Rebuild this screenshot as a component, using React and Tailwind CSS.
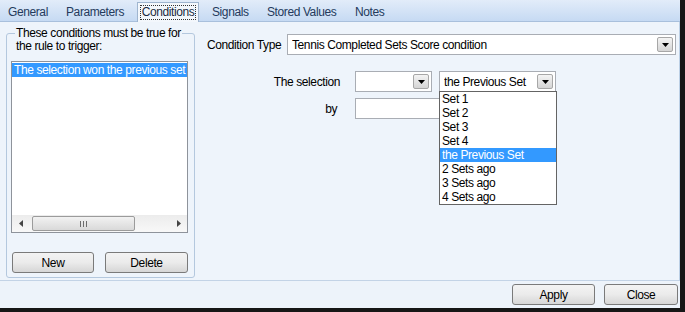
import React from "react";

const tabs = [
    { label: "General", cls: "w-[58px] pl-[8px]" },
    { label: "Parameters", cls: "w-[79px] pl-[8px]" },
    { label: "Conditions", selected: true },
    { label: "Signals", cls: "w-[68px] pl-[13px]" },
    { label: "Stored Values", cls: "w-[88px] pl-[0px]" },
    { label: "Notes", cls: "w-[60px] pl-[0px]" },
];

const setOptions = [
    "Set 1",
    "Set 2",
    "Set 3",
    "Set 4",
    "the Previous Set",
    "2 Sets ago",
    "3 Sets ago",
    "4 Sets ago",
];

const DownArrow = () => (
    <svg width="7" height="4" viewBox="0 0 7 4">
        <path d="M0 0h7L3.5 4z" fill="#000" />
    </svg>
);

const DropButton = () => (
    <div className="shrink-0 flex items-center justify-center w-[16px] h-[15px] border border-[#a7a7a7] rounded-[2px] bg-linear-to-b from-[#f4f4f4] to-[#d5d5d5]">
        <DownArrow />
    </div>
);

const Combo = ({ className, value }) => (
    <div
        className={`shrink-0 flex items-center h-[21px] border border-[#a9adb4] bg-white pl-[4px] pr-[2px] ${className}`}
    >
        <span className="flex-1 truncate">{value}</span>
        <DropButton />
    </div>
);

const Button = ({ className, children }) => (
    <div
        className={`shrink-0 flex items-center justify-center h-[21px] border border-[#7a7a7a] rounded-[3px] bg-linear-to-b from-[#f3f3f3] via-[#ebebeb] to-[#d6d6d6] text-black ${className}`}
    >
        {children}
    </div>
);

const HScroll = () => (
    <div className="flex items-center h-[17px] bg-linear-to-b from-[#ececec] to-[#f8f8f8] mt-auto">
        <div className="w-[17px] h-full flex items-center justify-center">
            <svg width="4" height="7" viewBox="0 0 4 7">
                <path d="M4 0v7L0 3.5z" fill="#444" />
            </svg>
        </div>
        <div className="ml-[3px] w-[103px] h-[15px] border border-[#9b9b9b] rounded-[2px] bg-linear-to-b from-[#f2f2f2] to-[#d9d9d9] flex items-center justify-center gap-[2px]">
            <span className="w-[1px] h-[6px] bg-[#6d6d6d]" />
            <span className="w-[1px] h-[6px] bg-[#6d6d6d]" />
            <span className="w-[1px] h-[6px] bg-[#6d6d6d]" />
        </div>
        <div className="flex-1" />
        <div className="w-[17px] h-full flex items-center justify-center">
            <svg width="4" height="7" viewBox="0 0 4 7">
                <path d="M0 0v7L4 3.5z" fill="#444" />
            </svg>
        </div>
    </div>
);

export default function App() {
    return (
        <div className="w-[685px] h-[312px] bg-[#161616] font-['Liberation_Sans',Arial,sans-serif] text-[12px] tracking-[-0.4px] leading-[14px] text-black overflow-hidden">
            <div className="w-[680px] h-[308px] flex flex-col bg-[#eef4fb]">
                {/* tab strip */}
                <div className="h-[22px] flex items-end bg-linear-to-b from-[#e2ecf9] to-[#c6daf3] border-b border-[#a9c0dc]">
                    {tabs.map((tab) =>
                        tab.selected ? (
                            <div
                                key={tab.label}
                                className="shrink-0 w-[62px] h-[20px] -mb-px bg-[#f3f7fc] border border-b-0 border-[#9fb5cf] flex items-center justify-center text-[#1a2a40]"
                            >
                                <span className="border border-dotted border-[#333] px-[1px] leading-[13px]">
                                    {tab.label}
                                </span>
                            </div>
                        ) : (
                            <div
                                key={tab.label}
                                className={`shrink-0 h-[22px] flex items-center pt-[3px] text-[#243a5c] ${tab.cls}`}
                            >
                                {tab.label}
                            </div>
                        )
                    )}
                </div>

                {/* page */}
                <div className="h-[259px] flex border-b border-[#c3d3e6] border-r border-r-[#bcd0e6]">
                    <div className="shrink-0 pl-[6px] pt-[11px]">
                        <div className="w-[189px] h-[245px] border border-[#b4c8de] rounded-[3px] flex flex-col">
                            <span className="self-start -mt-[7px] ml-[8px] px-[1px] bg-[#eef4fb] leading-[13px] whitespace-nowrap">
                                These conditions must be true for
                            </span>
                            <span className="ml-[9px] leading-[13px] whitespace-nowrap">
                                the rule to trigger:
                            </span>
                            <div className="ml-[4px] mt-[8px] w-[177px] h-[172px] border border-[#8e939b] bg-white flex flex-col">
                                <div className="h-[14px] mt-[1px] bg-[#3399ff] text-white pl-[2px] whitespace-nowrap overflow-hidden">
                                    The selection won the previous set by
                                </div>
                                <HScroll />
                            </div>
                            <div className="flex ml-[5px] mt-[19px] gap-[11px]">
                                <Button className="w-[82px]">New</Button>
                                <Button className="w-[83px]">Delete</Button>
                            </div>
                        </div>
                    </div>

                    <div className="flex-1 pl-[12px] pt-[12px]">
                        <div className="flex items-center">
                            <span className="shrink-0 w-[80px] whitespace-nowrap">
                                Condition Type
                            </span>
                            <Combo
                                className="w-[389px]"
                                value="Tennis Completed Sets Score condition"
                            />
                        </div>
                        <div className="flex items-center mt-[16px]">
                            <span className="shrink-0 w-[148px] text-right pr-[15px]">
                                The selection
                            </span>
                            <Combo className="w-[77px]" value="" />
                            <div className="relative ml-[7px]">
                                <Combo
                                    className="w-[117px]"
                                    value="the Previous Set"
                                />
                                <div className="absolute left-0 top-[20px] w-[118px] border border-[#646464] bg-white z-10">
                                    {setOptions.map((opt) => (
                                        <div
                                            key={opt}
                                            className={`h-[14px] pl-[2px] ${
                                                opt === "the Previous Set"
                                                    ? "bg-[#3399ff] text-white"
                                                    : ""
                                            }`}
                                        >
                                            {opt}
                                        </div>
                                    ))}
                                </div>
                            </div>
                        </div>
                        <div className="flex items-center mt-[6px]">
                            <span className="shrink-0 w-[148px] text-right pr-[18px]">
                                by
                            </span>
                            <div className="shrink-0 w-[110px] h-[21px] border border-[#a9adb4] bg-white" />
                        </div>
                    </div>
                </div>

                {/* footer */}
                <div className="flex-1 flex justify-end items-start pt-[3px] pr-[2px] gap-[9px] bg-[#edf3fa]">
                    <Button className="w-[83px]">Apply</Button>
                    <Button className="w-[74px]">Close</Button>
                </div>
            </div>
        </div>
    );
}
